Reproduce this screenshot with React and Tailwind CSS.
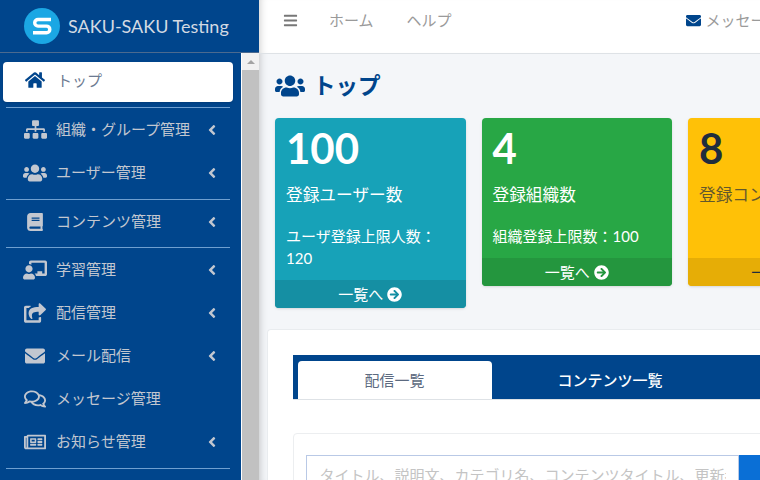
import React from 'react';
import {
  FaAngleLeft,
  FaArrowCircleRight,
  FaBars,
  FaBook,
  FaChalkboardTeacher,
  FaEnvelope,
  FaHome,
  FaRegComments,
  FaRegNewspaper,
  FaShareSquare,
  FaSitemap,
  FaUsers,
} from 'react-icons/fa';

const font = "font-['Lato','Noto_Sans_CJK_JP',sans-serif]";

function NavRow({ icon: Icon, label, arrow = true, size = 'text-[22px]' }) {
  return (
    <div className="flex h-[43px] items-center pl-[23px] pr-[21px] text-[#c2c7d0]">
      <span className={`flex w-[24px] justify-center ${size}`}>
        <Icon />
      </span>
      <span className="ml-[9px] flex-1 text-[15px] leading-none">{label}</span>
      {arrow && <FaAngleLeft className="text-[16px]" />}
    </div>
  );
}

function Divider() {
  return <div className="mx-[6px] h-px w-[224px] bg-[#6f9fd0]" />;
}

function Sidebar() {
  return (
    <aside className="flex w-[259px] shrink-0 flex-col bg-[#00458c]">
      <div className="flex h-[53px] items-center border-b border-[#4b6a8f] pl-[24px]">
        <svg viewBox="0 0 36 36" className="h-[36px] w-[36px]">
          <circle cx="18" cy="18" r="18" fill="#1ba7e4" />
          <path d="M27 11.5H14a3.3 3.3 0 0 0 0 6.6H22.5a3.3 3.3 0 0 1 0 6.6H9" fill="none" stroke="#fff" strokeWidth="3.4" />
        </svg>
        <span className="ml-[8px] text-[18px] text-[#d3dae3]">SAKU-SAKU Testing</span>
      </div>
      <div className="flex flex-1 overflow-hidden">
        <nav className="w-[241px] pt-[9px]">
          <div className="mx-[3px] mb-[5px] flex h-[40px] w-[230px] items-center rounded-[4px] bg-white pb-[4px] pl-[20px] text-[#00458c] shadow">
            <span className="flex w-[24px] justify-center text-[20px]">
              <FaHome />
            </span>
            <span className="ml-[10px] text-[15px] leading-none text-[#6c7a91]">トップ</span>
          </div>
          <Divider />
          <NavRow icon={FaSitemap} label="組織・グループ管理" size="text-[23px]" />
          <NavRow icon={FaUsers} label="ユーザー管理" size="text-[24px]" />
          <div className="h-[5px]" />
          <Divider />
          <NavRow icon={FaBook} label="コンテンツ管理" size="text-[18px]" />
          <div className="h-[4px]" />
          <Divider />
          <NavRow icon={FaChalkboardTeacher} label="学習管理" size="text-[24px]" />
          <NavRow icon={FaShareSquare} label="配信管理" />
          <NavRow icon={FaEnvelope} label="メール配信" size="text-[20px]" />
          <NavRow icon={FaRegComments} label="メッセージ管理" arrow={false} />
          <NavRow icon={FaRegNewspaper} label="お知らせ管理" />
          <div className="h-[5px]" />
          <Divider />
        </nav>
        <div className="flex w-[18px] flex-col border-l border-white bg-[#f1f1f1]">
          <div className="flex h-[17px] items-center justify-center">
            <span className="h-0 w-0 border-x-[4px] border-b-[4px] border-x-transparent border-b-[#a3a3a3]" />
          </div>
          <div className="flex-1 bg-[#c1c1c1]" />
        </div>
      </div>
    </aside>
  );
}

function Stat({ value, title, limit, bg, foot, dark = false, height }) {
  return (
    <div className={`flex w-[190.5px] shrink-0 flex-col self-start overflow-hidden rounded-[4px] shadow ${bg} ${dark ? 'text-[#1f2d3d]' : 'text-white'} ${height}`}>
      <div className="flex-1 pl-[11px] pt-[7px]">
        <div className="text-[42px] font-bold leading-[46px]">{value}</div>
        <div className={`mt-[12px] whitespace-nowrap text-[16.7px] leading-[24px] ${dark ? 'opacity-70' : ''}`}>{title}</div>
        <div className="mt-[18px] w-[165px] text-[15px] leading-[22px]">{limit}</div>
      </div>
      <div className={`flex h-[28px] items-center justify-center gap-[4px] text-[15px] ${foot}`}>
        一覧へ <FaArrowCircleRight className="text-[15px] text-white" />
      </div>
    </div>
  );
}

export default function App() {
  return (
    <div className={`flex h-[480px] w-[760px] overflow-hidden ${font}`}>
      <Sidebar />
      <main className="flex min-w-0 flex-1 flex-col bg-[#f4f6f9] shadow-[inset_8px_0_8px_-8px_rgba(0,0,0,0.25)]">
        <header className="flex h-[54px] shrink-0 items-start whitespace-nowrap border-b border-[#dee2e6] bg-white pt-[13px] text-[15px] leading-[15px] text-[#9a9a9a] shadow-[inset_8px_0_8px_-8px_rgba(0,0,0,0.25)]">
          <FaBars className="ml-[24px] mt-[0px] shrink-0 text-[15px] text-[#777]" />
          <span className="ml-[31px]">ホーム</span>
          <span className="ml-[33px]">ヘルプ</span>
          <FaEnvelope className="ml-[234px] mt-[0px] shrink-0 text-[15px] text-[#00458c]" />
          <span className="ml-[5px]">メッセージ</span>
        </header>
        <div className="flex flex-1 flex-col overflow-hidden pl-[16px]">
          <h1 className="mt-[17px] flex h-[30px] items-center text-[22.5px] font-bold leading-none text-[#00458c]">
            <FaUsers className="text-[30px]" />
            <span className="ml-[8px]">トップ</span>
          </h1>
          <div className="mt-[17px] flex h-[190px] gap-[16px]">
            <Stat value="100" title="登録ユーザー数" limit="ユーザ登録上限人数：120" bg="bg-[#17a2b8]" foot="bg-[#158fa3]" height="h-[190px]" />
            <Stat value="4" title="登録組織数" limit="組織登録上限数：100" bg="bg-[#28a745]" foot="bg-[#24963e]" height="h-[168px]" />
            <Stat value="8" title="登録コンテンツ数" limit="" bg="bg-[#ffc107]" foot="bg-[#e6ad06]" dark height="h-[168px]" />
          </div>
          <section className="-ml-[8.5px] mt-[21px] w-[600px] flex-1 rounded-tl-[4px] border-l border-t border-[#e9ecef] bg-white pl-[25px] pt-[25px]">
            <div className="flex h-[45px] items-end border-b border-[#dee2e6] bg-[#00458c] pl-[5px]">
              <div className="flex h-[38px] w-[194px] items-center justify-center rounded-t-[4px] bg-white text-[15px] text-[#5c6a80]">
                配信一覧
              </div>
              <div className="flex h-[38px] w-[237px] items-center justify-center text-[15px] font-medium text-white">
                コンテンツ一覧
              </div>
            </div>
            <div className="mt-[33px] h-[60px] rounded-[4px] border border-[#eceef0] pl-[12px] pt-[21px]">
              <div className="flex h-[40px]">
                <div className="flex w-[433px] items-start border border-[#b9c9e6] pl-[13px] pr-[12px] pt-[9px]">
                  <div className="overflow-hidden whitespace-nowrap text-[15px] leading-[20px] text-[#c4c4c4]">
                    タイトル、説明文、カテゴリ名、コンテンツタイトル、更新者
                  </div>
                </div>
                <div className="w-[60px] bg-[#0a6fd6]" />
              </div>
            </div>
          </section>
        </div>
      </main>
    </div>
  );
}
